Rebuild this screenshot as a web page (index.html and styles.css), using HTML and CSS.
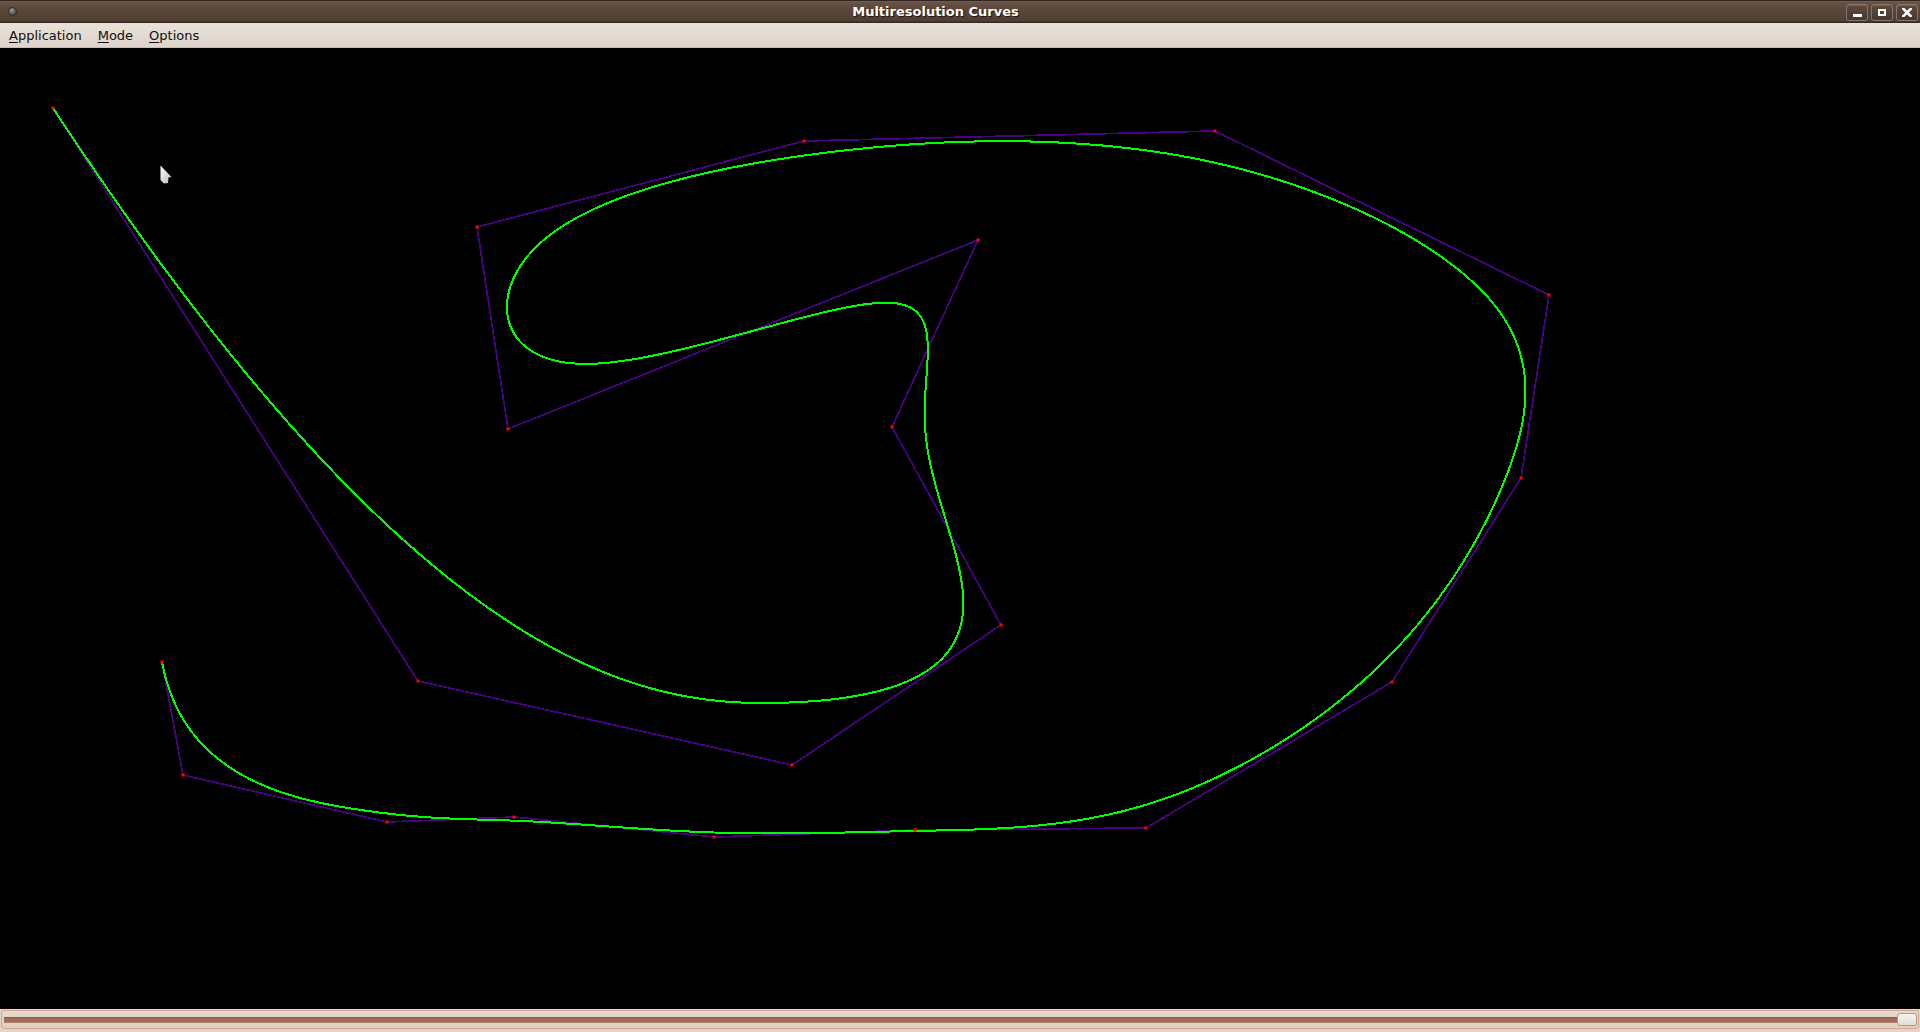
FILE: index.html
```html
<!DOCTYPE html>
<html>
<head>
<meta charset="utf-8">
<title>Multiresolution Curves</title>
<link rel="stylesheet" href="styles.css">
</head>
<body>
<div class="window">
  <header class="titlebar">
    <div class="title-left"><span class="win-icon"></span></div>
    <div class="title">Multiresolution Curves</div>
    <div class="title-buttons">
      <button class="tb-btn" aria-label="Minimize">
        <svg width="9" height="3" viewBox="0 0 9 3"><rect x="0" y="0" width="9" height="3" fill="#fff"/></svg>
      </button>
      <button class="tb-btn" aria-label="Maximize">
        <svg width="8" height="7" viewBox="0 0 8 7"><rect x="1" y="1" width="6" height="5" fill="none" stroke="#fff" stroke-width="2"/></svg>
      </button>
      <button class="tb-btn" aria-label="Close">
        <svg width="10" height="9" viewBox="0 0 10 9"><path d="M1 0.5 L9 8.5 M9 0.5 L1 8.5" stroke="#fff" stroke-width="2.6" stroke-linecap="square"/></svg>
      </button>
    </div>
  </header>
  <nav class="menubar">
    <span class="menu-item"><u>A</u>pplication</span>
    <span class="menu-item"><u>M</u>ode</span>
    <span class="menu-item"><u>O</u>ptions</span>
  </nav>
  <main class="canvas">
    <svg class="curves" viewBox="0 48 1920 961" preserveAspectRatio="none">
      <polyline id="control" class="control-polygon" points="53,108 418,681 792,765 1001,625 892,427 978,240 508,429 477,227 804,141 1215,131 1549,295 1521,478 1392,682 1146,828 915,830 714,837 514,817 387,822 183,775 162,662"/>
      <polyline id="curve" class="curve" points="" data-fine="53,108 425,676 866,736 1005,627 892,427 978,240 508,429 477,227 804,141 1215,131 1549,295 1521,478 1392,682 1146,828 915,830 714,837 514,817 387,822 183,775 162,662"/>
      <g id="points" class="ctrl-points"></g>
    </svg>
    <svg class="cursor" width="14" height="20" viewBox="0 0 14 20">
      <defs>
        <linearGradient id="cg" x1="0" y1="0" x2="1" y2="1">
          <stop offset="0" stop-color="#ffffff"/>
          <stop offset="1" stop-color="#b8b8b8"/>
        </linearGradient>
      </defs>
      <path d="M0.5 0.5 L11.5 12 L8.5 12.5 L8 18 L4 18.5 L0.5 15 Z" fill="url(#cg)"/>
    </svg>
  </main>
  <footer class="statusbar">
    <div class="scale">
      <div class="track"></div>
      <div class="handle"></div>
    </div>
  </footer>
</div>
<script src="script.js"></script>
</body>
</html>
```

FILE: styles.css
```css
* { box-sizing: border-box; }
html, body { margin: 0; padding: 0; background: #000; }
body { width: 1920px; height: 1032px; overflow: hidden; font-family: "DejaVu Sans", "Liberation Sans", sans-serif; }

.window { display: flex; flex-direction: column; width: 1920px; height: 1032px; }

.titlebar {
  height: 23px;
  display: grid;
  grid-template-columns: 25px 1fr 74px;
  background: linear-gradient(to bottom, #2e2620 0, #2e2620 1px, #7a6253 1px, #6a5344 2px, #5d4839 8px, #4f3e32 21px, #3b2f27 22px, #2a221c 23px);
}
.title-left { display: flex; align-items: center; justify-content: center; }
.win-icon {
  width: 9px; height: 9px; border-radius: 50%;
  background: radial-gradient(circle at 35% 30%, #9a9a9a 0, #5a5a5a 60%, #3c3c3c 100%);
  border: 1px solid #2a2a2a;
  margin-left: -1px;
}
.title {
  text-align: center;
  color: #fff;
  font-weight: bold;
  font-size: 13px;
  line-height: 22px;
  padding-top: 1px;
  text-shadow: 1px 1px 1px #1c140f;
}
.title-buttons { display: flex; gap: 3px; padding-top: 4px; padding-right: 2px; justify-content: flex-end; }
.tb-btn {
  width: 22px; height: 17px; padding: 0; margin: 0;
  border: 1px solid #86766a;
  border-radius: 3px;
  background: linear-gradient(to bottom, #5e4b3e, #463830);
  box-shadow: inset 0 1px 0 rgba(255,255,255,0.12);
  display: flex; align-items: center; justify-content: center;
}
.tb-btn:first-child { align-items: flex-end; padding-bottom: 3px; }
.tb-btn svg { display: block; }

.menubar {
  height: 25px;
  display: flex;
  align-items: center;
  padding-left: 1px;
  padding-top: 1px;
  background: linear-gradient(to bottom, #e9e1d9, #ddd3ca);
  border-bottom: 1px solid #c9bdb2;
  font-size: 13px;
  color: #101010;
}
.menu-item { padding: 0 8px; line-height: 23px; }
.menu-item u { text-decoration: underline; text-underline-offset: 2px; }

.canvas { flex: 1; position: relative; background: #000; overflow: hidden; }
.curves { display: block; width: 1920px; height: 961px; }
.control-polygon { fill: none; stroke: #4b0088; stroke-width: 1.7; shape-rendering: crispEdges; }
.curve { fill: none; stroke: #00ff00; stroke-width: 2; shape-rendering: crispEdges; }
.ctrl-points rect { fill: #ff0000; }
.cursor { position: absolute; left: 160px; top: 117px; }

.statusbar {
  height: 23px;
  background: #e2d4c9;
  padding: 1px 1px 3px 1px;
}
.scale {
  height: 19px;
  border: 1px solid #d8a98e;
  border-radius: 3px;
  background: linear-gradient(to bottom, #e6d8cd, #dfcfc3);
  display: flex;
  align-items: center;
  padding: 0 1px;
}
.track {
  flex: 1;
  height: 6px;
  margin-left: 1px;
  background: #9f6d5a;
  border-top: 1px solid #8c5b49;
  border-bottom: 1px solid #b08070;
}
.handle {
  width: 20px; height: 13px;
  border: 1px solid #a99c92;
  border-radius: 3px;
  background: linear-gradient(to bottom, #f6f3ef, #e2dcd5);
}
```

FILE: script.js
```js
(function () {
  function parse(str) {
    return str.trim().split(/\s+/).map(function (s) {
      var a = s.split(',');
      return [parseFloat(a[0]), parseFloat(a[1])];
    });
  }
  var ctrl = parse(document.getElementById('control').getAttribute('points'));
  var curveEl = document.getElementById('curve');
  var pts = parse(curveEl.getAttribute('data-fine'));
  var n = pts.length, p = 3;
  var U = [];
  var spans = n - p;
  for (var i = 0; i <= p; i++) U.push(0);
  for (var i = 1; i < spans; i++) U.push(i);
  for (var i = 0; i <= p; i++) U.push(spans);

  function deBoor(k, t) {
    var d = [];
    for (var j = 0; j <= p; j++) d.push(pts[j + k - p].slice());
    for (var r = 1; r <= p; r++) {
      for (var j = p; j >= r; j--) {
        var den = U[j + 1 + k - r] - U[j + k - p];
        var a = den === 0 ? 0 : (t - U[j + k - p]) / den;
        d[j] = [(1 - a) * d[j - 1][0] + a * d[j][0], (1 - a) * d[j - 1][1] + a * d[j][1]];
      }
    }
    return d[p];
  }

  var out = [];
  var steps = spans * 60;
  for (var s = 0; s <= steps; s++) {
    var t = s / steps * spans;
    var k = Math.min(Math.floor(t) + p, n - 1);
    var q = deBoor(k, t);
    out.push(q[0].toFixed(2) + ',' + q[1].toFixed(2));
  }
  curveEl.setAttribute('points', out.join(' '));

  var g = document.getElementById('points');
  var ns = 'http://www.w3.org/2000/svg';
  ctrl.forEach(function (q) {
    var r = document.createElementNS(ns, 'rect');
    r.setAttribute('x', Math.round(q[0]) - 1.5);
    r.setAttribute('y', Math.round(q[1]) - 1.5);
    r.setAttribute('width', 3);
    r.setAttribute('height', 3);
    g.appendChild(r);
  });
})();
```
